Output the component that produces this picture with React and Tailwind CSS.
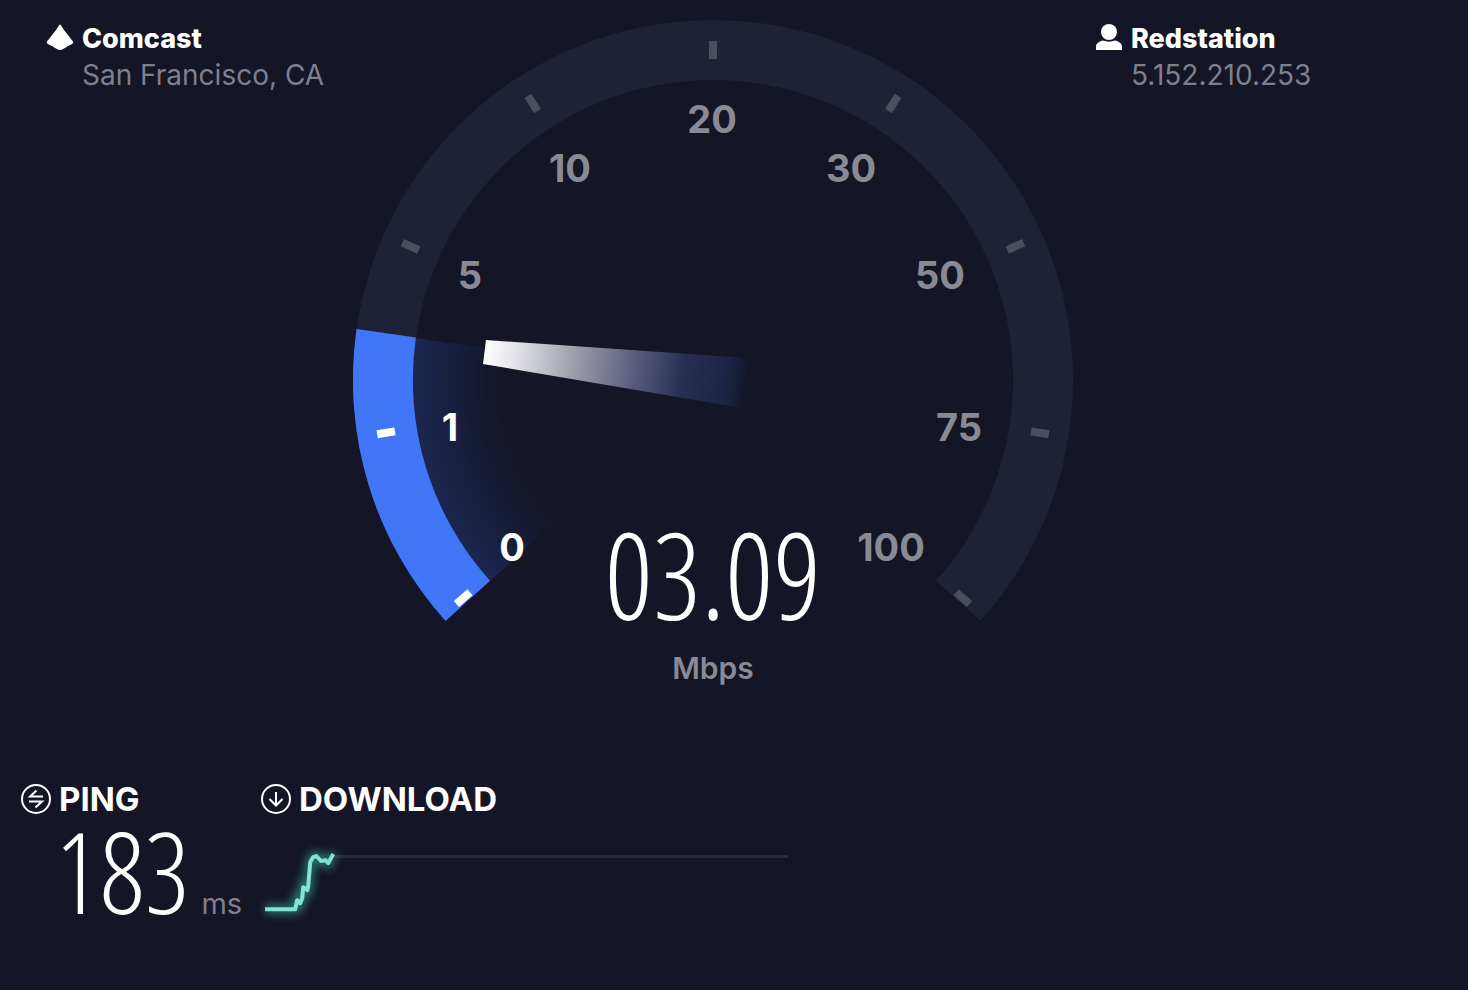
const TRACK = '#1e2237';
const MUTED = '#8a8a96';

const ticks = [
  { angle: -131, label: '0', x: 512, y: 547, active: true },
  { angle: -99, label: '1', x: 450, y: 427, active: true },
  { angle: -66, label: '5', x: 470, y: 275 },
  { angle: -33, label: '10', x: 570, y: 168 },
  { angle: 0, label: '20', x: 712, y: 119 },
  { angle: 33, label: '30', x: 851, y: 168 },
  { angle: 66, label: '50', x: 940, y: 275 },
  { angle: 99, label: '75', x: 959, y: 427 },
  { angle: 131, label: '100', x: 891, y: 547 },
];

function Host({ icon, name, detail, className }) {
  return (
    <div className={`flex items-start gap-2 pt-[21px] ${className}`}>
      {icon}
      <div className="whitespace-nowrap">
        <h2 className="text-[27px] leading-9 font-extrabold">{name}</h2>
        <p className="text-[28px] leading-9 text-[#7f7f90]">{detail}</p>
      </div>
    </div>
  );
}

function ProviderIcon() {
  return (
    <svg className="mt-[3px] size-7 shrink-0" viewBox="0 0 28 28" fill="#fff" aria-hidden="true">
      <path d="M14 0.500 C15 0.500 16 3 18 6 L27 17.500 C28 19.500 25 20.500 22 22 C19 24 16 26 14 26 C12 26 9 24 6 22 C3 20.500 0 19.500 1 17.500 L10 6 C12 3 13 0.500 14 0.500Z" />
    </svg>
  );
}

function PersonIcon() {
  return (
    <svg className="mt-[3px] size-7 shrink-0" viewBox="0 0 28 28" fill="#fff" aria-hidden="true">
      <circle cx="14" cy="8" r="8" />
      <path d="M1 26v-3.500c0-3.500 4-5.500 7-6 4 1.500 8 1.500 12 0 3 .5 7 2.500 7 6v3.500z" />
    </svg>
  );
}

function Gauge() {
  return (
    <svg className="col-start-1 row-start-1 w-full" viewBox="353 0 720 700" role="img" aria-label="Download speed gauge">
      <defs>
        <radialGradient id="glow" gradientUnits="userSpaceOnUse" cx="713" cy="380" r="300">
          <stop offset="0.7" stopColor="#1b2750" stopOpacity="0" />
          <stop offset="0.85" stopColor="#1b2750" stopOpacity="0.45" />
          <stop offset="1" stopColor="#1b2750" />
        </radialGradient>
        <linearGradient id="needle" gradientUnits="userSpaceOnUse" x1="484" y1="352" x2="748" y2="384">
          <stop offset="0" stopColor="#ffffff" />
          <stop offset="0.12" stopColor="#e2e2e8" />
          <stop offset="0.35" stopColor="#9a9ba8" />
          <stop offset="0.58" stopColor="#57597a" />
          <stop offset="0.75" stopColor="#283052" />
          <stop offset="0.92" stopColor="#1b2444" />
          <stop offset="1" stopColor="#1b2444" stopOpacity="0" />
        </linearGradient>
      </defs>
      <path d="M445.500 620.900 A360 360 0 1 1 980.500 620.900 L936 580.700 A300 300 0 1 0 490 580.700Z" fill={TRACK} />
      <path d="M713 380 L415.900 338.200 A300 300 0 0 0 490 580.700Z" fill="url(#glow)" />
      <path d="M356.500 329 A360 360 0 0 0 445.500 620.900 L490 580.700 A300 300 0 0 1 415.900 337.500Z" fill="#4076f7" />
      {ticks.map((t) => (
        <g key={t.label}>
          <rect x="709" y="41" width="8" height="18" fill={t.active ? '#fff' : '#4c4d5e'} transform={`rotate(${t.angle} 713 381)`} />
          <text x={t.x} y={t.y + 14} textAnchor="middle" fill={t.active ? '#fff' : MUTED} className="text-[38px] font-bold">
            {t.label}
          </text>
        </g>
      ))}
      <path d="M486 340 L748 358 L742 408 L483 364Z" fill="url(#needle)" />
    </svg>
  );
}

function PingIcon() {
  return (
    <svg className="size-[30px]" viewBox="0 0 30 30" fill="none" stroke="#fff" strokeWidth="2" aria-hidden="true">
      <circle cx="15" cy="15" r="14" />
      <path d="M22 12.500H9L15.500 6.500M8 17.500H21L14.500 23.500" />
    </svg>
  );
}

function DownloadIcon() {
  return (
    <svg className="size-[30px]" viewBox="0 0 30 30" fill="none" stroke="#fff" strokeWidth="2" aria-hidden="true">
      <circle cx="15" cy="15" r="14" />
      <path d="M15 8V21M8.500 15L15 21.500L21.500 15" />
    </svg>
  );
}

function DownloadChart() {
  const line = 'M12 70H42L44 61L47 64L49 59L50 48L54 51L55 47L57 23L60 18L63 17L68 22L72 21L75 24L80 15';
  return (
    <svg className="w-full" viewBox="0 0 540 90" fill="none" role="img" aria-label="Download speed over time">
      <defs>
        <filter id="soft" x="-30%" y="-40%" width="160%" height="180%">
          <feGaussianBlur stdDeviation="4" />
        </filter>
      </defs>
      <path d="M82 17.500H533" stroke="#242c42" strokeWidth="3" />
      <path d={line} stroke="#3aa79c" strokeWidth="10" opacity="0.6" filter="url(#soft)" />
      <path d={line} stroke="#7fe3d6" strokeWidth="4" strokeLinejoin="round" />
    </svg>
  );
}

export default function App() {
  return (
    <main className="min-h-screen bg-[#141526] font-['Inter',sans-serif] text-white">
      <section className="grid grid-cols-[minmax(0,1fr)_minmax(0,720px)_minmax(0,1fr)] pr-[42px]">
        <Host icon={<ProviderIcon />} name="Comcast" detail="San Francisco, CA" className="pl-[46px]" />
        <div className="grid">
          <Gauge />
          <div className="col-start-1 row-start-1 flex flex-col items-center gap-3 self-end pb-[14px]">
            <p className="font-['Open_Sans_Condensed_Light','Roboto_Condensed',sans-serif] text-[120px] leading-[128px] font-light">03.09</p>
            <p className="text-[30px] leading-9 font-semibold text-[#8a8a96]">Mbps</p>
          </div>
        </div>
        <Host icon={<PersonIcon />} name="Redstation" detail="5.152.210.253" className="pl-[22px]" />
      </section>

      <section className="flex gap-5 px-[21px] pt-[79px]">
        <div className="w-[220px] shrink-0">
          <h3 className="flex items-center gap-2 text-[33px] leading-10 font-bold">
            <PingIcon />
            PING
          </h3>
          <p className="flex items-baseline gap-3 pl-[34px] whitespace-nowrap">
            <span className="font-['Open_Sans_Condensed_Light','Roboto_Condensed',sans-serif] text-[112px] leading-[104px] font-light">183</span>
            <span className="text-[29px] text-[#7f7f90]">ms</span>
          </p>
        </div>
        <div className="w-[534px]">
          <h3 className="flex items-center gap-2 text-[33px] leading-10 font-bold">
            <DownloadIcon />
            DOWNLOAD
          </h3>
          <div className="-ml-2 pt-5">
            <DownloadChart />
          </div>
        </div>
      </section>
    </main>
  );
}
